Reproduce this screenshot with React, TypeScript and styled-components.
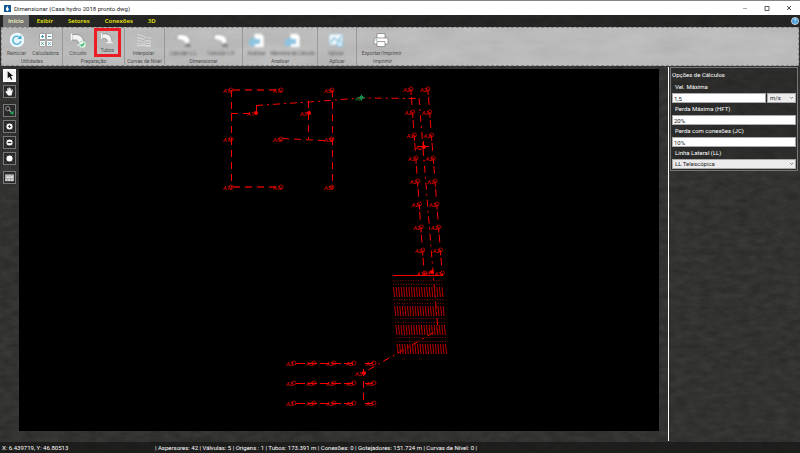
import React from "react";
import styled, { createGlobalStyle } from "styled-components";

const stone = (low: number, high: number, strength: number) =>
  `url("data:image/svg+xml,${encodeURIComponent(
    `<svg xmlns='http://www.w3.org/2000/svg' width='800' height='450'><filter id='n' x='0' y='0' width='100%' height='100%'><feTurbulence type='fractalNoise' baseFrequency='${low} ${high}' numOctaves='5' seed='8' stitchTiles='stitch'/><feColorMatrix values='0 0 0 0 0  0 0 0 0 0  0 0 0 0 0  ${strength} 0 0 0 0'/></filter><rect width='800' height='450' filter='url(#n)'/></svg>`
  )}")`;

const GlobalStyle = createGlobalStyle`
  * { box-sizing: border-box; }
  body { margin: 0; background: #333332; }
  body, button, input, select { font-family: Roboto, "Open Sans", sans-serif; font-size: 6px; }
`;

const Window = styled.div`
  display: flex;
  flex-direction: column;
  min-height: 100vh;
  background: ${stone(0.08, 0.16, 0.35)} #3d3d3b;
  color: #fff;
`;

const TitleBar = styled.header`
  display: flex;
  align-items: center;
  height: 15px;
  padding-left: 4px;
  gap: 3px;
  background: #fff;
  border-top: 1px solid #858585;
  color: #222;
`;

const Title = styled.h1`
  flex: 1;
  margin: 0;
  font-size: 6px;
  font-weight: 400;
`;

const WindowButton = styled.button`
  display: grid;
  place-items: center;
  width: 18px;
  height: 13px;
  padding: 0;
  border: 0;
  background: none;
`;

const WindowButtons = styled.div`
  display: flex;
  gap: 4px;
  padding-right: 2px;
`;

const TabBar = styled.nav`
  display: flex;
  align-items: stretch;
  height: 12px;
  padding: 0 1px 0 3px;
  background: #1a1b1a88;
`;

const Tab = styled.button<{ $active?: boolean }>`
  padding: 0 ${(p) => (p.$active ? 5 : 7)}px;
  margin-right: 1px;
  border: 0;
  font-family: "Open Sans", sans-serif;
  font-size: 6px;
  font-weight: 600;
  line-height: 12px;
  background: ${(p) => (p.$active ? "#777" : "transparent")};
  color: ${(p) => (p.$active ? "#ffffc8" : "#f2f20c")};
`;

const HelpButton = styled.button`
  margin-left: auto;
  padding: 0;
  border: 0;
  background: none;
  display: grid;
  place-items: center;
`;

const Ribbon = styled.div`
  display: flex;
  height: 39px;
  margin: 0 1px;
  border: 1px dashed #8b8b8b;
  background: ${stone(0.02, 0.06, 0.1)} #c4c4c4;
`;

const Group = styled.section<{ $width: number; $last?: boolean }>`
  display: flex;
  flex-direction: column;
  width: ${(p) => p.$width}px;
  border-right: ${(p) => (p.$last ? "0" : "1px solid #989898")};
`;

const GroupItems = styled.div`
  display: flex;
  flex: 1;
  justify-content: space-around;
  padding-right: 2px;
`;

const GroupName = styled.h2`
  margin: 0;
  font-size: 5px;
  font-weight: 400;
  line-height: 8px;
  text-align: center;
  white-space: nowrap;
  color: #4c4c4c;
`;

const Tool = styled.button<{ $marked?: boolean }>`
  display: flex;
  flex-direction: column;
  align-items: center;
  justify-content: flex-start;
  gap: 1px;
  min-width: 27px;
  height: 29px;
  padding: ${(p) => (p.$marked ? 0 : 3)}px 0 0;
  border: ${(p) => (p.$marked ? "3px solid #ed1c24" : "0")};
  background: none;
  color: #505050;
  font-size: 5px;
  line-height: 7px;
  white-space: nowrap;
  &:disabled {
    color: #555;
    filter: blur(1px);
  }
`;

const Main = styled.main`
  display: flex;
  flex: 1;
`;

const SideTools = styled.div`
  display: flex;
  flex-direction: column;
  gap: 3px;
  width: 19px;
  padding: 3px;
`;

const SideTool = styled.button<{ $active?: boolean; $spaced?: boolean }>`
  display: grid;
  place-items: center;
  width: 13px;
  height: 13px;
  margin-top: ${(p) => (p.$spaced ? 3 : 0)}px;
  padding: 0;
  border: 1px solid ${(p) => (p.$active ? "#fff" : "#777")};
  background: ${(p) => (p.$active ? "#f4f4f4" : "#292929")};
`;

const Canvas = styled.div`
  display: flex;
  flex: 1;
  margin: 3px 9px 11px 0;
  background: #000;
`;

const Drawing = styled.svg`
  width: 100%;
  height: auto;
  font: italic 6px Roboto, sans-serif;
`;

const Side = styled.aside`
  width: 132px;
  padding: 0 2px 0 1px;
  margin: 1px 0;
  border-left: 1px solid #fff;
`;

const Panel = styled.form`
  display: flex;
  flex-direction: column;
  padding: 1px;
  border: 1px solid #777;
  background: #22222266;
`;

const PanelTitle = styled.h2`
  margin: 0;
  font-size: 6px;
  font-weight: 400;
  line-height: 12px;
`;

const Label = styled.label`
  padding-left: 3px;
  line-height: 12px;
`;

const FieldRow = styled.div`
  display: grid;
  grid-template-columns: 1fr 29px;
  gap: 1px;
`;

const Input = styled.input`
  min-width: 0;
  width: 100%;
  height: 10px;
  padding: 0 1px;
  border: 1px solid #aaa;
  border-radius: 0;
  background: #fff;
  color: #222;
  line-height: 8px;
`;

const Select = styled.select`
  appearance: none;
  min-width: 0;
  width: 100%;
  height: 10px;
  padding: 0 2px;
  border: 1px solid #aaa;
  border-radius: 0;
  color: #222;
  line-height: 8px;
  background: url("data:image/svg+xml,%3Csvg xmlns='http://www.w3.org/2000/svg' width='5' height='4'%3E%3Cpath d='M1 1l1.5 1.5L4 1' fill='none' stroke='%23555' stroke-width='.7'/%3E%3C/svg%3E")
    no-repeat right 1px center #ebebeb;
`;

const StatusBar = styled.footer`
  display: flex;
  align-items: center;
  height: 11px;
  padding-left: 2px;
  background: #141414aa;
  font-size: 6px;
  line-height: 11px;
  white-space: nowrap;
`;

const Position = styled.span`
  width: 153px;
`;

const Icon = ({ children, size = 18 }: { children: React.ReactNode; size?: number }) => (
  <svg width={size} height={size} viewBox="0 0 18 18" fill="none" aria-hidden="true">{children}</svg>
);

const Elbow = () => (
  <>
    <path d="M3 3.500h4c5 0 8 4 8 10h-5.500c0-3-1-4.500-3-4.500H3z" fill="#f3f3f3" stroke="#888" strokeWidth=".8" />
    <path d="M2.500 2.500v7M8.500 14h7.500" stroke="#f5f5f5" strokeWidth="1.500" />
  </>
);
const Reload = () => (
  <>
    <circle cx="9" cy="9" r="6.600" fill="#e5f5fb" stroke="#eefaff" strokeWidth="1.500" />
    <path d="M12.200 7a4 4 0 1 0 .6 3M12.800 4.500v3h-3" stroke="#3ba7cf" strokeWidth="1.200" />
  </>
);
const Calculator = () => (
  <>
    <rect x="2.500" y="2.500" width="6" height="6" rx="1" fill="#fff" stroke="#888" strokeWidth=".7" />
    <rect x="9.500" y="2.500" width="6" height="6" rx="1" fill="#fff" stroke="#888" strokeWidth=".7" />
    <rect x="2.500" y="9.500" width="6" height="6" rx="1" fill="#fff" stroke="#888" strokeWidth=".7" />
    <rect x="9.500" y="9.500" width="6" height="6" rx="1" fill="#fff" stroke="#888" strokeWidth=".7" />
    <path d="M4 5.500h3M5.500 4v3M11 5.500h3" stroke="#459abb" />
    <path d="M4.300 11.300l2.500 2.500M4.300 13.800l2.500-2.500" stroke="#3a9a68" />
    <path d="M11.200 11.300l2.500 2.500M11.200 13.800l2.500-2.500" stroke="#459abb" />
  </>
);
const Circuit = () => (
  <>
    <Elbow />
    <circle cx="13.500" cy="13.500" r="3.500" fill="#e7f7ec" stroke="#8ac7a0" strokeWidth=".5" />
    <path d="M11.700 13.500l1.300 1.300 2.300-2.700" stroke="#22a45c" strokeWidth="1.200" />
  </>
);
const Terrain = () => (
  <>
    <path d="M2 4c5-1 7 4 14 3M2 7c5-1 8 4 14 3M2 10c5-1 8 4 14 2M2 13c4-3 9 3 14 1M2 15c5-2 8 1 14 0" stroke="#e2e2e2" />
    <path d="M2 5c5-1 7 4 14 3M2 11c5-1 8 4 14 2M3 14l11-8" stroke="#aaa" strokeWidth=".5" />
  </>
);
const ElbowTap = () => (
  <>
    <path d="M2 4c5-2 12 0 13 5v4h-5c0-3-3-4-8-4z" fill="#fff" stroke="#999" />
    <path d="M10 15h6M13 12v3" stroke="#777" strokeWidth="1.500" />
  </>
);
const Report = () => (
  <>
    <path d="M6 2.500h7l3 3v11H6z" fill="#fff" stroke="#aaa" strokeWidth=".5" />
    <path d="M1 9l6-3v2h5v5H7v2H1z" fill="#8cc4e0" />
  </>
);
const Apply = () => (
  <>
    <rect x="2" y="3" width="14" height="11" fill="#f6fafc" stroke="#8cb6cc" strokeWidth=".7" />
    <path d="M3 12l4-5 4 3 4-5" stroke="#84bedd" strokeWidth="1.500" />
    <circle cx="13" cy="13" r="3" fill="#d8effa" stroke="#7dbbdc" />
  </>
);
const Printer = () => (
  <>
    <path d="M5 2.500h8v5H5z" fill="#fff" stroke="#777" strokeWidth=".7" />
    <rect x="2" y="7" width="14" height="6" rx="1" fill="#fff" stroke="#777" strokeWidth=".7" />
    <path d="M5 10.500h8v5H5z" fill="#fff" stroke="#777" strokeWidth=".7" />
    <path d="M3.500 9h1.500" stroke="#2589c8" />
  </>
);

type ToolInfo = { label: string; icon: React.ReactNode; disabled?: boolean; marked?: boolean };
const groups: { name: string; width: number; tools: ToolInfo[] }[] = [
  { name: "Utilidades", width: 61, tools: [{ label: "Reiniciar", icon: <Reload /> }, { label: "Calculadora", icon: <Calculator /> }] },
  { name: "Preparação", width: 62, tools: [{ label: "Circuito", icon: <Circuit /> }, { label: "Tubos", icon: <Elbow />, marked: true }] },
  { name: "Curvas de Nível", width: 40, tools: [{ label: "Interpolar", icon: <Terrain /> }] },
  { name: "Dimensionar", width: 78, tools: [{ label: "Calcular L.L.", icon: <ElbowTap />, disabled: true }, { label: "Calcular L.P.", icon: <ElbowTap />, disabled: true }] },
  { name: "Analisar", width: 75, tools: [{ label: "Analisar", icon: <Report />, disabled: true }, { label: "Memória de Cálculo", icon: <Report />, disabled: true }] },
  { name: "Aplicar", width: 39, tools: [{ label: "Aplicar", icon: <Apply />, disabled: true }] },
  { name: "Imprimir", width: 51, tools: [{ label: "Exportar/Imprimir", icon: <Printer /> }] },
];

const Lens = ({ sign }: { sign: "plus" | "minus" | "none" }) => (
  <>
    <path d="M4 4l10 10M14 4l-2 2M4 14l2-2" stroke="#777" strokeWidth="1.500" />
    <circle cx="9" cy="9" r="5" fill="#fff" />
    {sign !== "none" && <path d={sign === "plus" ? "M7 9h4M9 7v4" : "M6 9h6"} stroke="#222" strokeWidth="2" />}
  </>
);

const sideTools = [
  { name: "Selecionar", active: true, icon: <path d="M6 2v12l3-3 2.500 5 2-1-2.500-5h4z" fill="#111" /> },
  { name: "Mover", icon: <path d="M4 8l2 2V4l2 4V3h1v5l2-4v5l3-3-2 9H7L3 10z" fill="#fff" stroke="#fff" /> },
  { name: "Medir", spaced: true, icon: <><circle cx="6" cy="6" r="3.500" stroke="#999" strokeWidth="1.500" /><path d="M8 8l4 4" stroke="#aaa" strokeWidth="2" /><path d="M9 13l6 3 1-7-3 3z" fill="#16b455" /></> },
  { name: "Ampliar", icon: <Lens sign="plus" /> },
  { name: "Reduzir", icon: <Lens sign="minus" /> },
  { name: "Enquadrar", icon: <Lens sign="none" /> },
  { name: "Imagem", spaced: true, icon: <><rect x="2" y="4" width="14" height="11" fill="#ddd" /><path d="M2 7l5-1 3 1 6-3M2 11h14M6 12v3M11 11v4" stroke="#777" /></> },
];

const Node = ({ x, y, tag }: { x: number; y: number; tag: string }) => (
  <g>
    <circle cx={x} cy={y} r="2" fill="none" stroke="#d00000" strokeWidth=".8" />
    <path d={`M${x} ${y}v3`} stroke="#e00000" />
    <text x={x - 8} y={y + 3} fill="#e80000">{tag}</text>
  </g>
);
const Valve = ({ x, y, tag }: { x: number; y: number; tag: string }) => (
  <g>
    <circle cx={x} cy={y} r="2" fill="#f00" />
    <text x={x - 9} y={y + 3} fill="#e80000">{tag}</text>
  </g>
);

const houseNodes: [number, number, string][] = [
  [231, 90, "A1"], [281, 90, "A1"], [332, 90, "A5"],
  [231, 139, "A1"], [281, 139, "A5"], [332, 139, "A5"],
  [231, 187, "A1"], [281, 187, "A1"], [332, 187, "A5"],
];
const laneRows = [89, 112, 135, 158, 181, 204, 227, 250, 273];
const plotBands = [287, 306, 325, 344];
const plotColumns = Array.from({ length: 20 }, (_, i) => i);
const gardenRows = [363, 383, 403];
const gardenColumns = [294, 314, 334, 354, 374];

const IrrigationPlan = () => (
  <Drawing viewBox="19 69 640 362" role="img" aria-label="Planta de irrigação">
    <g fill="none" stroke="#f00" strokeDasharray="7 5">
      <path d="M231.500 90v97M332.500 90v97" />
      <path d="M233 90h48M233 187h48" strokeWidth="1.500" stroke="#d00000" />
      <path d="M231 113.500h25M308.500 101v38M282 138.500l50 2.500" />
      <path d="M256.500 113v-8" strokeDasharray="none" />
      <path d="M411 91l13 180M428 91l14 180" strokeDasharray="8 15" strokeDashoffset="-6" />
      <path d="M411 92l13 180M428 92l14 180" strokeDasharray="3 20" />
      <path d="M363.500 369v34" />
    </g>
    <g fill="none" stroke="#f00" strokeDasharray="7 4 2 4">
      <path d="M256 105.500l53-3.500 52-4 58 .5" />
      <path d="M419 98l14 174 5 58-75 43" />
    </g>
    <path d="M418 146.500h11M423.500 141v8" stroke="#f00" />
    <path d="M393 275.500h50" stroke="#f00" />
    {plotColumns.map((i) => (
      <g key={i} stroke="#b80000" strokeWidth="1">
        {plotBands.map((y, b) => {
          const x = 393.5 + i * 2.55 + b * 1.2;
          return <path key={y} d={`M${x} ${y}l1 10`} />;
        })}
        {plotBands.map((y, b) => {
          const x = 393.5 + i * 2.55 + b * 1.2;
          return <path key={y} d={`M${x - 0.5} ${y - 7}v1M${x} ${y - 3}v1`} stroke="#800000" />;
        })}
      </g>
    ))}
    {houseNodes.map(([x, y, tag]) => <Node key={`${x}-${y}`} x={x} y={y} tag={tag} />)}
    {laneRows.map((y, i) => (
      <g key={y}>
        <Node x={411 + i * 1.7} y={y} tag="A2" />
        <Node x={428 + i * 1.8} y={y} tag="A2" />
      </g>
    ))}
    {gardenRows.map((y) => (
      <g key={y}>
        <path d={`M296 ${y + 0.5}h58M365 ${y + 0.5}h7`} stroke="#f00" strokeDasharray="9 3" />
        {gardenColumns.map((x) => (
          <g key={x}>
            <circle cx={x} cy={y} r="2" fill="none" stroke="#d00000" strokeWidth=".8" />
            <text x={x - 8} y={y + 3} fill="#e80000">A3</text>
          </g>
        ))}
      </g>
    ))}
    <Valve x={256} y={113} tag="A1" />
    <Valve x={309} y={113} tag="A5" />
    <Valve x={424} y={147} tag="A2" />
    <Valve x={432} y={272} tag="A4" />
    <Valve x={364} y={373} tag="A3" />
    <path d="M361.500 94.500v6M358 97.500h7" stroke="#0a7d3e" />
    <circle cx="361.500" cy="97.500" r="2" fill="#129450" />
    <text x="355" y="101" fill="#0a7d3e">AR</text>
  </Drawing>
);

export default function App() {
  return (
    <Window>
      <GlobalStyle />
      <TitleBar>
        <svg width="7" height="7" viewBox="0 0 7 7" aria-hidden="true">
          <rect width="7" height="7" fill="#13599a" />
          <path d="M2 5V3l2-2v2l1 1-1 2H3z" fill="#fff" />
        </svg>
        <Title>Dimensionar (Casa hydro 2018 pronto.dwg)</Title>
        <WindowButtons>
          <WindowButton aria-label="Minimizar"><svg width="6" height="6"><path d="M1 3.500h4" stroke="#aaa" /></svg></WindowButton>
          <WindowButton aria-label="Maximizar"><svg width="6" height="6"><path d="M1 1.500h4v4H1z" fill="none" stroke="#333" strokeWidth=".8" /></svg></WindowButton>
          <WindowButton aria-label="Fechar"><svg width="6" height="6"><path d="M1 1l4 4M5 1L1 5" stroke="#222" strokeWidth=".8" /></svg></WindowButton>
        </WindowButtons>
      </TitleBar>
      <TabBar>
        {["Início", "Exibir", "Setores", "Conexões", "3D"].map((name, i) => (
          <Tab key={name} $active={i === 0}>{name}</Tab>
        ))}
        <HelpButton aria-label="Ajuda">
          <svg width="8" height="8" viewBox="0 0 8 8">
            <circle cx="4" cy="4" r="3.500" fill="#3c9bd8" stroke="#eee" strokeWidth=".8" />
            <path d="M3 3c0-1.500 2.300-1.300 2 0-.1.700-1 .8-1 1.600M4 5.500v.8" fill="none" stroke="#fff" strokeWidth=".8" />
          </svg>
        </HelpButton>
      </TabBar>
      <Ribbon>
        {groups.map((group, i) => (
          <Group key={group.name} $width={group.width} $last={i === groups.length - 1}>
            <GroupItems>
              {group.tools.map((tool) => (
                <Tool key={tool.label} disabled={tool.disabled} $marked={tool.marked}>
                  <Icon>{tool.icon}</Icon>
                  {tool.label}
                </Tool>
              ))}
            </GroupItems>
            <GroupName>{group.name}</GroupName>
          </Group>
        ))}
      </Ribbon>
      <Main>
        <SideTools>
          {sideTools.map((tool) => (
            <SideTool key={tool.name} aria-label={tool.name} $active={tool.active} $spaced={tool.spaced}>
              <Icon size={11}>{tool.icon}</Icon>
            </SideTool>
          ))}
        </SideTools>
        <Canvas><IrrigationPlan /></Canvas>
        <Side>
          <Panel>
            <PanelTitle>Opções de Cálculos</PanelTitle>
            <Label htmlFor="speed">Vel. Máxima</Label>
            <FieldRow>
              <Input id="speed" defaultValue="1,5" />
              <Select aria-label="Unidade"><option>m/s</option></Select>
            </FieldRow>
            <Label htmlFor="loss">Perda Máxima (HFT)</Label>
            <Input id="loss" defaultValue="20%" />
            <Label htmlFor="fittings">Perda com conexões (JC)</Label>
            <Input id="fittings" defaultValue="10%" />
            <Label htmlFor="lateral">Linha Lateral (LL)</Label>
            <Select id="lateral"><option>LL Telescópica</option></Select>
          </Panel>
        </Side>
      </Main>
      <StatusBar>
        <Position>X: 6.439719, Y: 46.80513</Position>
        <span>| Aspersores: 42 | Válvulas: 5 | Origens : 1 | Tubos: 173.391 m | Conexões: 0 | Gotejadores: 151.724 m | Curvas de Nível: 0 |</span>
      </StatusBar>
    </Window>
  );
}
